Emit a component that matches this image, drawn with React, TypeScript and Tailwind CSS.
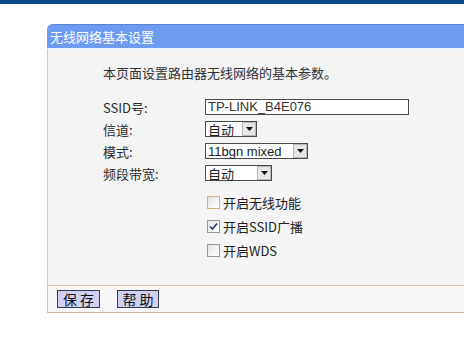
const cjk = "font-['SimSun','Noto_Sans_CJK_SC',sans-serif]";

function Arrow() {
  return (
    <span className="flex h-[14px] w-[14px] items-center justify-center border border-[#b8b8b8] bg-[#e6e6e6]">
      <svg width="7" height="4" viewBox="0 0 7 4">
        <path d="M0 0h7L3.5 4z" fill="#111" />
      </svg>
    </span>
  );
}

interface SelectProps {
  value: string;
  width: string;
  latin?: boolean;
}
function FakeSelect({ value, width, latin }: SelectProps) {
  return (
    <div
      className={`flex h-[16px] items-center justify-between border border-[#4a4a4a] bg-white pl-[2px] ${width}`}
    >
      <span
        className={`text-[13px] leading-none text-[#222] ${
          latin ? "font-['Liberation_Sans',sans-serif]" : cjk
        }`}
      >
        {value}
      </span>
      <Arrow />
    </div>
  );
}

interface CheckProps {
  label: string;
  checked?: boolean;
  focus?: boolean;
}
function Check({ label, checked, focus }: CheckProps) {
  return (
    <div className="flex h-[24px] items-center">
      <span
        className={`ml-[2px] flex h-[13px] w-[13px] items-center justify-center border bg-gradient-to-br from-[#e4e4e4] to-white ${
          focus ? "border-[#d2b47a]" : "border-[#9a9a9a]"
        }`}
      >
        {checked && (
          <svg width="9" height="9" viewBox="0 0 9 9">
            <path d="M1 4.5l2.5 2.5L8 1.5" stroke="#2a3a6a" strokeWidth="1.6" fill="none" />
          </svg>
        )}
      </span>
      <span className="ml-[3px] text-[13px] leading-none text-[#222]">{label}</span>
    </div>
  );
}

function Row({ label, children }: { label: string; children: React.ReactNode }) {
  return (
    <div className="flex h-[22px] items-center">
      <span className="w-[102px] text-[13px] leading-none text-[#2a2a2a]">{label}</span>
      {children}
    </div>
  );
}

export default function App() {
  return (
    <div className={`h-[358px] w-[464px] overflow-hidden bg-white ${cjk}`}>
      <div className="h-[4px] bg-[#0b4b8b]" />
      <div className="ml-[47px] mt-[20px] w-[440px]">
        <div className="flex h-[24px] items-center rounded-tl-[6px] border-t border-[#5a86d6] bg-[#6b9cf2] pl-[3px] text-[13px] text-white">
          无线网络基本设置
        </div>
        <div className="h-[1px] bg-[#e4f2ff]" />
        <div className="h-[236px] border-l border-[#dccab0] bg-[#f4f4f4] pl-[55px] pt-[16px]">
          <div className="flex h-[16px] items-center text-[13px] text-[#333]">
            本页面设置路由器无线网络的基本参数。
          </div>
          <div className="h-[15px]" />
          <Row label="SSID号:">
            <div className="flex h-[16px] w-[204px] items-center border border-[#4a4a4a] bg-white pl-[2px] font-['Liberation_Sans',sans-serif] text-[13px] text-[#333]">
              TP-LINK_B4E076
            </div>
          </Row>
          <Row label="信道:">
            <FakeSelect value="自动" width="w-[52px]" />
          </Row>
          <Row label="模式:">
            <FakeSelect value="11bgn mixed" width="w-[103px]" latin />
          </Row>
          <Row label="频段带宽:">
            <FakeSelect value="自动" width="w-[67px]" />
          </Row>
          <div className="ml-[102px] mt-[6px] flex flex-col">
            <Check label="开启无线功能" focus />
            <Check label="开启SSID广播" checked />
            <Check label="开启WDS" />
          </div>
        </div>
        <div className="flex h-[28px] items-center gap-[17px] border-b border-l border-t border-[#dcc4a8] border-b-[#c8b49a] bg-[#f7f7f9] pl-[9px]">
          <button className="h-[18px] w-[43px] border border-[#3a3a4a] bg-[#cfd0f2] text-[14px] leading-none text-[#111]">
            保 存
          </button>
          <button className="h-[18px] w-[42px] border border-[#3a3a4a] bg-[#cfd0f2] text-[14px] leading-none text-[#111]">
            帮 助
          </button>
        </div>
      </div>
    </div>
  );
}
